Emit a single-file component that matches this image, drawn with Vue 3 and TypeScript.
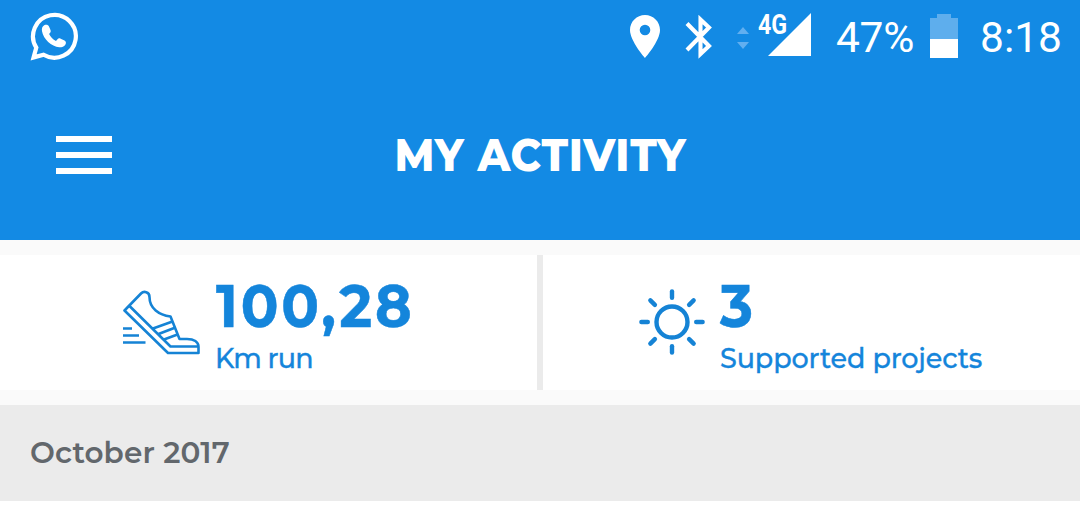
<script setup lang="ts">
interface Stat {
  id: 'distance' | 'projects'
  value: string
  label: string
}

const stats: Stat[] = [
  { id: 'distance', value: '100,28', label: 'Km run' },
  { id: 'projects', value: '3', label: 'Supported projects' },
]
const rays: number[] = [0, 45, 90, 135, 180, 225, 270, 315]
</script>

<template>
  <div class="screen">
    <header class="top">
      <div class="status">
        <svg class="whatsapp" width="52" height="52" viewBox="0 0 52 52">
          <path d="M5.600 45.400L8.300 35.600A21.400 21.400 0 1 1 15.600 42.700Z" fill="none" stroke="#fff" stroke-width="4.200" stroke-linejoin="miter" />
          <path d="M16.200 13.300c-1.800.9-2.700 3.400-2.200 6 1.300 7.700 9.500 15.300 17.300 16 3.700.3 6.600-1.700 6.600-4.500 0-1-.5-1.700-1.400-2.200l-3.800-1.900c-1.300-.6-2.400-.4-3.200.5l-1.500 1.700c-3-1.300-5.600-4-6.900-6.900l1-1.300c.7-.9.800-1.700.4-2.800l-1.500-3.500c-.6-1.500-3-2-4.800-1.100Z" fill="#fff" />
        </svg>
        <div class="indicators">
          <svg class="pin" width="30" height="43" viewBox="0 0 30 43">
            <path fill-rule="evenodd" d="M15 0C6.700 0 0 6.700 0 15c0 11 15 28 15 28s15-17 15-28C30 6.700 23.300 0 15 0Zm0 9.700a5.300 5.300 0 1 1 0 10.600 5.300 5.300 0 0 1 0-10.600Z" fill="#fff" />
          </svg>
          <svg class="bluetooth" width="28" height="44" viewBox="0 0 28 44">
            <path d="M2 8.500L24 31 15.500 39V4.500L24 12.500 2 35" fill="none" stroke="#fff" stroke-width="4.100" />
          </svg>
          <svg class="traffic" width="12" height="23" viewBox="0 0 12 23">
            <path d="M0 7L6 0l6 7ZM0 15h12l-6 7Z" fill="#61aff0" />
          </svg>
          <div class="signal">
            <svg width="43" height="43" viewBox="0 0 43 43"><path d="M43 0v43H0Z" fill="#fff" /></svg>
            <span class="network">4G</span>
          </div>
          <span class="percent">47%</span>
          <svg class="battery" width="28" height="44" viewBox="0 0 28 44">
            <path d="M7 0h14v4h7v21H0V4h7Z" fill="#5eaeed" />
            <path d="M0 25h28v19H0Z" fill="#fff" />
          </svg>
          <span class="clock">8:18</span>
        </div>
      </div>
      <div class="bar">
        <button class="menu" type="button" aria-label="Menu"><i /><i /><i /></button>
        <h1 class="title">MY ACTIVITY</h1>
      </div>
    </header>

    <section class="stats">
      <div v-for="stat in stats" :key="stat.id" class="stat" :class="stat.id">
        <svg v-if="stat.id === 'distance'" class="icon" width="78" height="66" viewBox="0 0 78 66">
          <g fill="none" stroke="#1583d5" stroke-width="2.600" stroke-linejoin="round">
            <path d="M2.500 20.500L19 3.500C21.500 1 27.500 1.200 27.500 7 27.500 18.500 37 25 48.500 26.500L57.500 49H65C72 49 76.500 52 76.500 57V63H46Z" />
            <path d="M7.500 16L48.500 56.500H76.500M31 38.500L50.500 31.500M36.500 44L53.500 37.500M42 49.500L55.500 44.500" />
            <path d="M1 38.500H10M1 45.500H17M1 52.500H23.500" />
          </g>
        </svg>
        <svg v-else class="icon" width="68" height="68" viewBox="-34 -34 68 68">
          <g fill="none" stroke="#1583d5" stroke-width="4.400" stroke-linecap="round">
            <circle r="15.500" />
            <path v-for="angle in rays" :key="angle" d="M0-30.600V-24.200" :transform="`rotate(${angle})`" />
          </g>
        </svg>
        <div class="copy">
          <strong class="value">{{ stat.value }}</strong>
          <span class="label">{{ stat.label }}</span>
        </div>
      </div>
    </section>

    <h2 class="month">October 2017</h2>
  </div>
</template>

<style>
body { background: #fff; }
</style>

<style scoped>
.screen {
  width: 1080px;
  height: 520px;
  overflow: hidden;
  background: #fff;
  font-family: Montserrat, Inter, sans-serif;
}
.top { height: 240px; background: #138ae4; color: #fff; }
.status {
  display: flex;
  justify-content: space-between;
  height: 75px;
  font-family: Roboto, sans-serif;
}
.whatsapp { margin: 12px 0 0 28px; }
.indicators { display: flex; width: 450px; }
.indicators svg { flex: none; display: block; }
.pin { margin-top: 15px; }
.bluetooth { margin: 15px 0 0 25px; }
.traffic { margin: 27px 0 0 24px; }
.signal { position: relative; margin: 13px 0 0 19px; width: 43px; }
.network {
  position: absolute;
  left: -10px;
  top: -1px;
  font-size: 27px;
  line-height: 27px;
  font-weight: 700;
  transform: scaleX(.86);
  transform-origin: left;
}
.percent, .clock { font-size: 42.5px; line-height: 50px; margin-top: 13px; white-space: nowrap; }
.percent { width: 78px; margin-left: 25px; letter-spacing: -.3px; }
.battery { margin: 14px 0 0 16px; }
.clock { margin-left: 22px; }
.bar { display: grid; grid-template-columns: 112px 1fr 112px; align-items: center; height: 160px; }
.menu {
  display: grid;
  gap: 10px;
  width: 56px;
  margin-left: 56px;
  padding: 0;
  border: 0;
  background: none;
}
.menu i { height: 6px; background: #fff; }
.title {
  margin: -1px 0 0 1px;
  text-align: center;
  font-size: 45.5px;
  line-height: 54px;
  font-weight: 800;
  letter-spacing: .8px;
  transform: scaleX(.92);
}
.stats {
  display: grid;
  grid-template-columns: 537px 537px;
  gap: 6px;
  height: 135px;
  border-top: 15px solid #fafafa;
  border-bottom: 15px solid #fafafa;
  background: #ebebeb;
}
.stat { display: flex; background: #fff; color: #1485db; }
.icon { flex: none; }
.distance { padding-left: 122px; }
.distance .icon { margin-top: 35px; }
.distance .copy { margin-left: 16px; }
.distance .label { margin-left: -1px; letter-spacing: -.8px; }
.projects { padding-left: 95px; }
.projects .icon { margin-top: 33px; }
.projects .copy { margin-left: 14px; }
.copy { display: flex; flex-direction: column; align-items: flex-start; white-space: nowrap; }
.value {
  margin-top: 14px;
  font-size: 60.5px;
  line-height: 73px;
  font-weight: 700;
  letter-spacing: 3.1px;
  transform: scaleX(.92);
  transform-origin: left;
  -webkit-text-stroke: .5px currentColor;
}
.label { margin-top: 1px; font-size: 27px; line-height: 32px; font-weight: 500; letter-spacing: -.1px; -webkit-text-stroke: .3px currentColor; }
.month {
  box-sizing: border-box;
  height: 96px;
  margin: 0;
  padding-left: 30px;
  background: #ebebeb;
  color: #62676c;
  font-size: 29.5px;
  line-height: 95px;
  font-weight: 600;
  letter-spacing: .1px;
}
</style>
